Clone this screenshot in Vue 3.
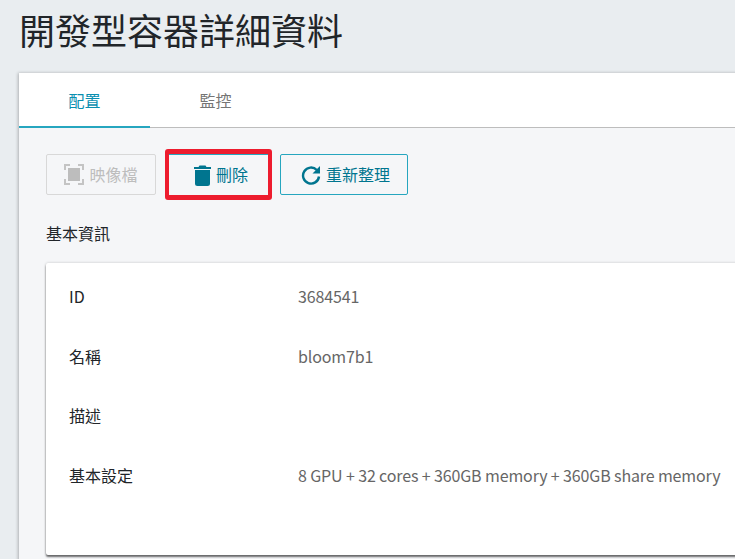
<script setup>
const rows = [
  { label: 'ID', value: '3684541' },
  { label: '名稱', value: 'bloom7b1' },
  { label: '描述', value: '' },
  { label: '基本設定', value: '8 GPU + 32 cores + 360GB memory + 360GB share memory' },
]
</script>

<template>
  <div class="page">
    <h1 class="title">開發型容器詳細資料</h1>
    <section class="panel">
      <nav class="tabs">
        <div class="tab active">配置</div>
        <div class="tab">監控</div>
      </nav>
      <div class="content">
        <div class="actions">
          <button class="btn disabled">
            <svg class="ic" width="20" height="21" viewBox="0 0 20 21">
              <path d="M6 1H1v19h5M14 1h5v19h-5" fill="none" stroke="#c4c4c4" stroke-width="2"/>
              <path d="M1 6v9M19 6v9" fill="none" stroke="#f5f6f8" stroke-width="3"/>
              <rect x="4" y="4" width="12" height="13" fill="#bdbdbd"/>
            </svg>
            映像檔
          </button>
          <div class="highlight">
            <button class="btn del">
              <svg class="ic" width="17" height="21" viewBox="0 0 17 21">
                <path d="M5.5 0.5h6L12.5 2H17v2H0V2h4.5z" fill="#00758f"/>
                <path d="M1 5h15v13.5a2.5 2.5 0 0 1-2.5 2.5h-10A2.5 2.5 0 0 1 1 18.500z" fill="#00758f"/>
              </svg>
              刪除
            </button>
          </div>
          <button class="btn refresh">
            <svg class="ic" width="20" height="20" viewBox="0 0 20 20">
              <path d="M15.8 5A8 8 0 1 0 18 11.500" fill="none" stroke="#00758f" stroke-width="2.400"/>
              <path d="M19 1v7.500h-7.500z" fill="#00758f"/>
            </svg>
            重新整理
          </button>
        </div>
        <h2 class="section">基本資訊</h2>
        <div class="card">
          <div v-for="r in rows" :key="r.label" class="row">
            <div class="label">{{ r.label }}</div>
            <div class="value">{{ r.value }}</div>
          </div>
        </div>
      </div>
    </section>
  </div>
</template>

<style>
html, body { margin: 0; overflow: hidden; background: #e9edf0; }
</style>

<style scoped>
.page {
  width: 735px;
  height: 559px;
  overflow: hidden;
  font-family: "Noto Sans CJK TC", sans-serif;
  font-size: 16px;
  color: #212529;
}
.title {
  margin: 0;
  padding: 7px 0 0 19px;
  height: 73px;
  box-sizing: border-box;
  font-size: 36px;
  line-height: 44px;
  font-weight: 400;
  color: #212529;
}
.panel {
  margin-left: 19px;
  width: 760px;
  height: 520px;
  background: #f5f6f8;
  box-shadow: -1px 0 3px rgba(0, 0, 0, .25);
}
.tabs {
  display: flex;
  height: 55px;
  box-sizing: border-box;
  background: #fff;
  border-bottom: 1px solid #bdbdbd;
}
.tab {
  width: 131px;
  height: 55px;
  box-sizing: border-box;
  text-align: center;
  line-height: 54px;
  color: #757575;
}
.tab.active {
  color: #0a8fb0;
  border-bottom: 2px solid #26a6bf;
}
.content {
  padding: 26px 0 0 27px;
}
.actions {
  display: flex;
  align-items: center;
  height: 41px;
}
.btn {
  display: flex;
  align-items: center;
  justify-content: center;
  box-sizing: border-box;
  height: 41px;
  padding: 0 0 2px;
  background: transparent;
  border: 1px solid #26a6bf;
  border-radius: 2px;
  font: inherit;
  color: #00758f;
}
.ic {
  margin-top: 2px;
}
.disabled {
  width: 110px;
  border-color: #d8d8d8;
  color: #bdbdbd;
  gap: 5px;
}
.highlight {
  margin-left: 9px;
  width: 107px;
  height: 51px;
  box-sizing: border-box;
  padding: 5px 4px;
  border-radius: 3px;
  background: #ed1c2e;
}
.del {
  width: 99px;
  height: 41px;
  padding-left: 5px;
  background: #f5f6f8;
  gap: 5px;
  border: 0;
  border-top: 1px solid #26a6bf;
  border-radius: 0;
}
.refresh {
  margin-left: 8px;
  width: 128px;
  padding-left: 3px;
  gap: 5px;
}
.section {
  margin: 0;
  padding-top: 26px;
  font-size: 16px;
  line-height: 24px;
  font-weight: 400;
  color: #212529;
}
.card {
  margin-top: 18px;
  width: 740px;
  height: 292px;
  box-sizing: border-box;
  padding-top: 3px;
  background: #fff;
  border-radius: 2px;
  box-shadow: 0 2px 2px rgba(0, 0, 0, .55), 0 0 3px rgba(0, 0, 0, .2);
}
.row {
  display: flex;
  height: 59.7px;
  align-items: center;
  padding-left: 23px;
}
.label {
  width: 229px;
  color: #212529;
}
.value {
  color: #666;
  letter-spacing: -0.13px;
}
</style>
